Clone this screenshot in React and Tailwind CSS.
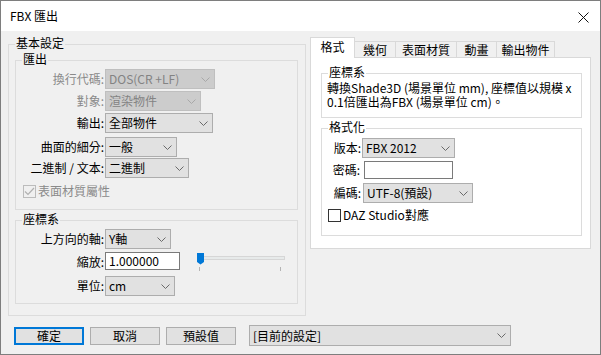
import React from "react";

function Chevron({ disabled }) {
  return (
    <svg width="9" height="5" viewBox="0 0 9 5" className="shrink-0">
      <polyline points="0.5,0.5 4.5,4.5 8.5,0.5" fill="none" stroke={disabled ? "#a8a8a8" : "#6a6a6a"} strokeWidth="1" />
    </svg>
  );
}

function Select({ w, h = "h-[20px]", value, disabled }) {
  const tone = disabled
    ? "bg-[#cccccc] border-[#bfbfbf] text-[#838383]"
    : "bg-[#e1e1e1] border-[#adadad] text-black";
  return (
    <div className={`flex items-center justify-between border pl-[3px] pr-[4px] ${w} ${h} ${tone}`}>
      <span className="whitespace-nowrap">{value}</span>
      <Chevron disabled={disabled} />
    </div>
  );
}

function Field({ w, value }) {
  return (
    <div className={`flex items-center h-[18px] border border-[#7a7a7a] bg-white pl-[3px] ${w}`}>
      {value}
    </div>
  );
}

function Group({ label, className, children }) {
  return (
    <div className={`border border-[#dcdcdc] flex flex-col ${className}`}>
      <div className="mt-[-8px] mb-[-4px] ml-[6px] px-[1px] w-fit h-[12px] leading-[12px] bg-inherit whitespace-nowrap">{label}</div>
      {children}
    </div>
  );
}

function Row({ label, disabled, className, children }) {
  return (
    <div className={`flex items-start ${className}`}>
      <div className={`w-[89px] pr-[1px] text-right h-[20px] leading-[20px] ${disabled ? "text-[#8a8a8a]" : "text-black"}`}>{label}</div>
      {children}
    </div>
  );
}

function Slider() {
  return (
    <svg width="92" height="20" viewBox="0 0 92 20" className="ml-[16px]">
      <rect x="1.5" y="4.5" width="87" height="3" fill="#e7eaea" stroke="#d6d6d6" />
      <polygon points="1,1 8,1 8,10 4.5,12.5 1,10" fill="#0078d7" />
      <line x1="3.5" y1="15" x2="3.5" y2="19" stroke="#b4b4b4" />
      <line x1="84.5" y1="15" x2="84.5" y2="19" stroke="#b4b4b4" />
    </svg>
  );
}

function Check({ checked, disabled }) {
  return (
    <div className={`w-[13px] h-[13px] border flex items-center justify-center ${disabled ? "border-[#bcbcbc] bg-[#f0f0f0]" : "border-[#333333] bg-white"}`}>
      {checked && (
        <svg width="11" height="9" viewBox="0 0 11 9">
          <polyline points="1,4.5 4,7.5 10,1" fill="none" stroke="#b0b0b0" strokeWidth="1.2" />
        </svg>
      )}
    </div>
  );
}

function Button({ children, primary }) {
  return (
    <div className={`w-[70px] h-[18px] flex items-center justify-center bg-[#e1e1e1] ${primary ? "border-2 border-[#0078d7]" : "border border-[#adadad]"}`}>
      {children}
    </div>
  );
}

const tabs = [
  { name: "幾何", w: "w-[41px]" },
  { name: "表面材質", w: "w-[61px]" },
  { name: "動畫", w: "w-[40px]" },
  { name: "輸出物件", w: "w-[58px]" },
];

export default function App() {
  return (
    <div className="w-[601px] h-[355px] border border-[#7e7e7e] flex flex-col font-['Noto_Sans_CJK_TC',sans-serif] text-[12px] leading-[14px] text-black">
      <div className="h-[30px] shrink-0 bg-white flex items-center pl-[9px]">
        <span>FBX 匯出</span>
        <svg width="11" height="11" viewBox="0 0 11 11" className="ml-auto mr-[11px] mt-[3px]">
          <line x1="0.5" y1="0.5" x2="10.5" y2="10.5" stroke="#111" />
          <line x1="10.5" y1="0.5" x2="0.5" y2="10.5" stroke="#111" />
        </svg>
      </div>

      <div className="flex-1 bg-[#f0f0f0] flex flex-col">
        <div className="flex items-start pl-[7px] h-[285px]">
          <Group label="基本設定" className="w-[298px] h-[272px] mt-[13px] bg-[#f0f0f0]">
            <Group label="匯出" className="w-[283px] h-[150px] mt-[15px] ml-[6px] bg-[#f0f0f0]">
              <Row label="換行代碼:" disabled className="mt-[8px]">
                <Select w="w-[110px]" value="DOS(CR +LF)" disabled />
              </Row>
              <Row label="對象:" disabled className="mt-[2px]">
                <Select w="w-[96px]" value="渲染物件" disabled />
              </Row>
              <Row label="輸出:" className="mt-[2px]">
                <Select w="w-[108px]" value="全部物件" />
              </Row>
              <Row label="曲面的細分:" className="mt-[4px]">
                <Select w="w-[72px]" value="一般" />
              </Row>
              <Row label="二進制 / 文本:" className="mt-[1px]">
                <Select w="w-[84px]" value="二進制" />
              </Row>
              <div className="flex items-center mt-[6px] ml-[7px] text-[#8a8a8a]">
                <Check checked disabled />
                <span className="ml-[2px]">表面材質屬性</span>
              </div>
            </Group>

            <Group label="座標系" className="w-[283px] h-[84px] mt-[10px] ml-[6px] bg-[#f0f0f0]">
              <Row label="上方向的軸:" className="mt-[8px]">
                <Select w="w-[66px]" value="Y軸" />
              </Row>
              <Row label="縮放:" className="mt-[3px]">
                <Field w="w-[75px]" value="1.000000" />
                <Slider />
              </Row>
              <Row label="單位:" className="mt-[4px]">
                <Select w="w-[70px]" value="cm" />
              </Row>
            </Group>
          </Group>

          <div className="ml-[4px] mt-[6px] w-[281px] flex flex-col">
            <div className="flex items-end h-[20px]">
              <div className="relative w-[45px] h-[21px] mb-[-1px] bg-white border-t border-l border-r border-[#d9d9d9] flex items-center justify-center pb-[3px]">
                格式
              </div>
              {tabs.map((t) => (
                <div key={t.name} className={`${t.w} h-[16px] border-t border-r border-[#d9d9d9] flex items-center justify-center`}>
                  {t.name}
                </div>
              ))}
            </div>
            <div className="h-[192px] bg-white border border-[#d9d9d9] flex flex-col">
              <Group label="座標系" className="w-[261px] h-[45px] mt-[15px] ml-[10px] bg-white">
                <div className="mt-[7px] ml-[5px] leading-[14px]">
                  <div>轉換Shade3D (場景單位 mm), 座標值以規模 x</div>
                  <div>0.1倍匯出為FBX (場景單位 cm)。</div>
                </div>
              </Group>
              <Group label="格式化" className="w-[261px] h-[108px] mt-[10px] ml-[10px] bg-white">
                <div className="flex items-start mt-[9px]">
                  <div className="w-[40px] pr-[1px] text-right h-[20px] leading-[20px]">版本:</div>
                  <Select w="w-[93px]" value="FBX 2012" />
                </div>
                <div className="flex items-start mt-[3px]">
                  <div className="w-[38px] text-right h-[18px] leading-[18px]">密碼:</div>
                  <div className="ml-[4px]">
                    <Field w="w-[89px]" value="" />
                  </div>
                </div>
                <div className="flex items-start mt-[4px]">
                  <div className="w-[40px] pr-[1px] text-right h-[20px] leading-[20px]">編碼:</div>
                  <div className="ml-[1px]">
                    <Select w="w-[110px]" value="UTF-8(預設)" />
                  </div>
                </div>
                <div className="flex items-center mt-[5px] ml-[6px]">
                  <Check />
                  <span className="ml-[2px]">DAZ Studio對應</span>
                </div>
              </Group>
            </div>
          </div>
        </div>

        <div className="flex items-center pl-[13px] mt-[9px] h-[21px]">
          <Button primary>確定</Button>
          <div className="ml-[6px]"><Button>取消</Button></div>
          <div className="ml-[6px]"><Button>預設值</Button></div>
          <div className="ml-[13px]">
            <Select w="w-[262px]" h="h-[21px]" value="[目前的設定]" />
          </div>
        </div>
      </div>
    </div>
  );
}
